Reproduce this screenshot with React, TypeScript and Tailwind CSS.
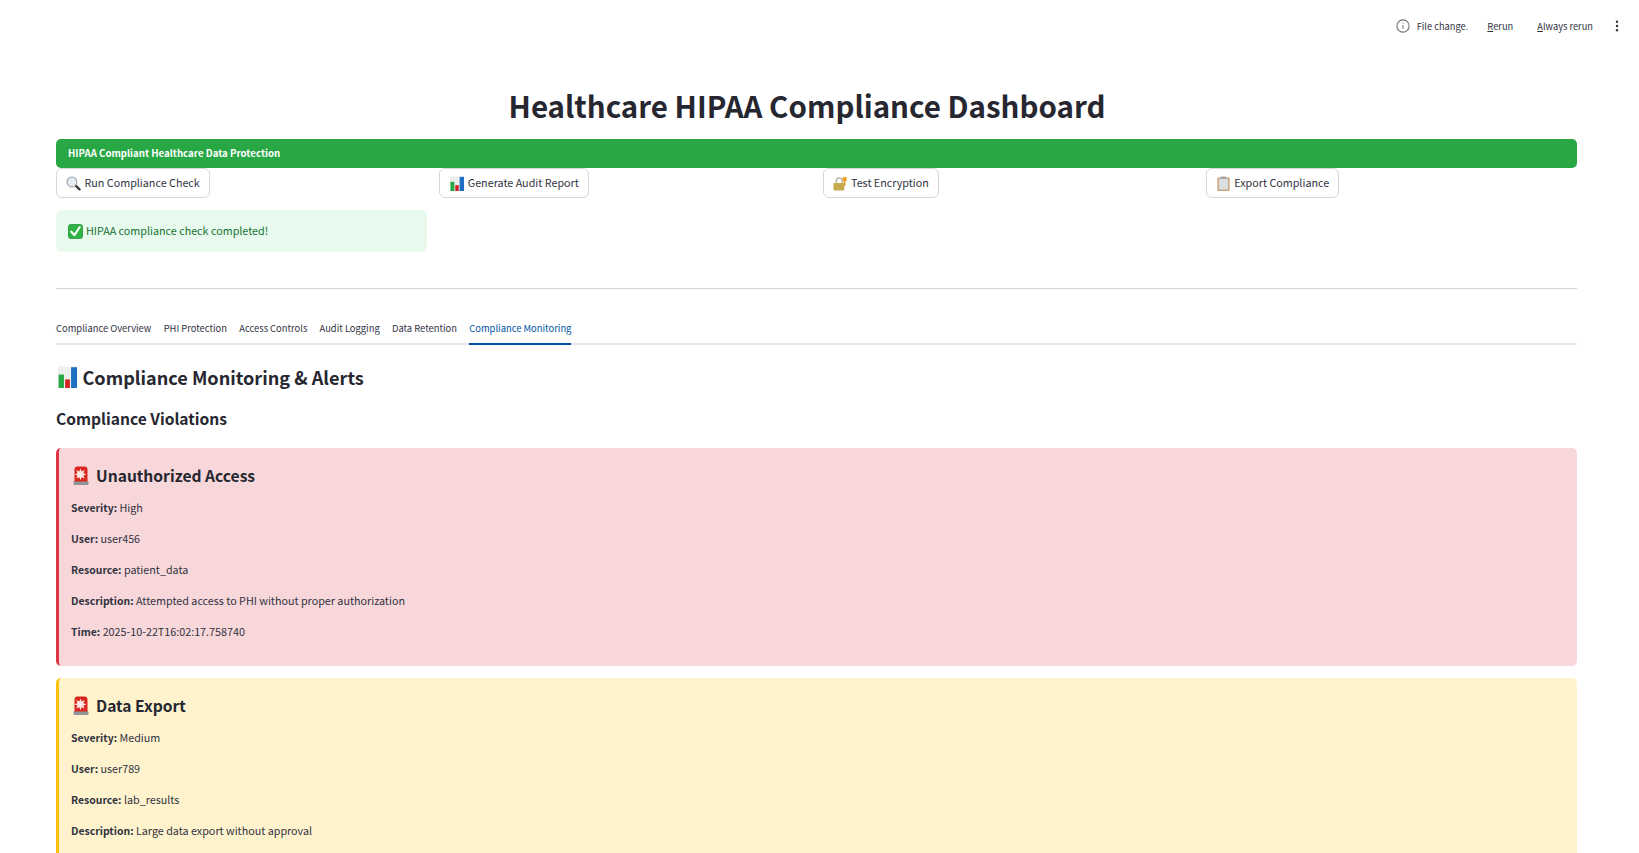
const Magnifier = () => (
  <svg viewBox="0 0 16 16" className="w-[15px] h-[15px] shrink-0">
    <path d="M9.8 9.8 L14.4 14.2" stroke="#3a3a3a" strokeWidth="2.6" strokeLinecap="round" />
    <circle cx="6.3" cy="6.3" r="5.2" fill="#e6eef5" stroke="#a3abb3" strokeWidth="1.3" />
  </svg>
);
const BarChart = ({ c = "ml-[1px] w-[14px] h-[15px]" }: { c?: string }) => (
  <svg viewBox="0 0 16 18" preserveAspectRatio="none" className={c + " shrink-0"}>
    <rect x="0" y="0.5" width="16" height="17.5" fill="#eeeeee" />
    <rect x="0.5" y="7" width="4.5" height="11" fill="#27a844" />
    <rect x="6" y="11" width="4" height="7" fill="#d32424" />
    <rect x="11" y="1" width="5" height="17" fill="#1f6fc4" />
  </svg>
);
const Lock = () => (
  <svg viewBox="0 0 16 16" className="w-[15px] h-[15px] shrink-0">
    <path d="M3.5 8V5.2a3.2 3.2 0 0 1 6.4 0V8" fill="none" stroke="#b8b8b0" strokeWidth="1.6" />
    <rect x="0.5" y="7.5" width="11.5" height="8" rx="1" fill="#c7a94f" />
    <circle cx="12.4" cy="3.4" r="2.5" fill="#e9a62a" />
    <rect x="11.5" y="4.5" width="1.8" height="6" fill="#e0a02a" />
  </svg>
);
const Clipboard = () => (
  <svg viewBox="0 0 16 16" className="w-[15px] h-[15px] shrink-0">
    <rect x="1.5" y="1.5" width="13" height="14.5" rx="1" fill="#c79f78" />
    <rect x="3" y="3" width="10" height="11.5" fill="#dcdfe1" />
    <rect x="5" y="0.5" width="6" height="2.5" rx="0.6" fill="#a5a5a5" />
  </svg>
);
const Check = () => (
  <svg viewBox="0 0 16 16" className="w-[15px] h-[15px] shrink-0">
    <rect x="0.5" y="0.5" width="15" height="15" rx="2.5" fill="#2fb344" stroke="#1f8f35" strokeWidth="0.8" />
    <path d="M3.5 8.2 L6.8 11.8 L12.6 3.2" fill="none" stroke="#fff" strokeWidth="2.2" strokeLinecap="round" strokeLinejoin="round" />
  </svg>
);
const Siren = () => (
  <svg viewBox="0 0 16 19" className="ml-[2px] w-[16px] h-[19px] shrink-0">
    <rect x="0.5" y="15" width="15" height="4" rx="1" fill="#8f9499" />
    <path d="M1.5 15.5V3.5a3 3 0 0 1 3-3h7a3 3 0 0 1 3 3v12z" fill="#d9261f" />
    <path d="M7.5 2.5l1.1 3 3-1.4-1.2 3.1 3 1.1-3 1.2 1.2 3-3-1.2-1.1 3-1.2-3-3 1.2 1.2-3-3-1.2 3-1.1-1.2-3.1 3 1.4z" fill="#fde9e4" />
  </svg>
);

const Field = ({ k, v }: { k: string; v: string }) => (
  <p className="h-[31px] text-[10.76px] leading-[31px] text-[#31333f]">
    <span className="font-bold text-[10.45px]">{k}:</span> {v}
  </p>
);

const Alert = ({ title, bg, border, fields }: { title: string; bg: string; border: string; fields: [string, string][] }) => (
  <div className={`rounded-[5px] border-l-[3px] pl-3 pr-3 pt-[14px] pb-[19px] ${bg} ${border}`}>
    <h4 className="flex items-center gap-[7px] h-[26px] text-[15.6px] leading-[26px] font-semibold text-[#262730]">
      <Siren />
      {title}
    </h4>
    <div className="mt-[4px]">
      {fields.map(([k, v]) => (
        <Field key={k} k={k} v={v} />
      ))}
    </div>
  </div>
);

const Btn = ({ icon, label }: { icon: React.ReactNode; label: string }) => (
  <button className="flex items-center gap-[3.5px] h-[30px] px-[9px] rounded-[6px] border border-[#d5d6da] bg-white text-[10.75px] text-[#31333f]">
    {icon}
    {label}
  </button>
);

const tabs = ["Compliance Overview", "PHI Protection", "Access Controls", "Audit Logging", "Data Retention", "Compliance Monitoring"];

export default function App() {
  return (
    <div className="bg-white h-[853px] overflow-hidden font-['Noto_Sans_CJK_SC','Noto_Sans',sans-serif] text-[#31333f]">
      <header className="flex items-center justify-end h-[52px] text-[9.3px] text-[#31333f]">
        <svg viewBox="0 0 16 16" className="w-[14px] h-[14px] text-[#6d6f78]" fill="none" stroke="currentColor" strokeWidth="1.2">
          <circle cx="8" cy="8" r="7" />
          <path d="M8 7.2v4M8 4.4v1" />
        </svg>
        <span className="ml-[7px] mt-[2px]">File change.</span>
        <span className="ml-[19px] mt-[2px]"><span className="underline">R</span>erun</span>
        <span className="ml-[24px] mt-[2px]"><span className="underline">A</span>lways rerun</span>
        <svg viewBox="0 0 4 14" className="w-[4px] h-[12px] ml-[22px] mr-[20px]" fill="#31333f">
          <circle cx="2" cy="2" r="1.4" />
          <circle cx="2" cy="7" r="1.4" />
          <circle cx="2" cy="12" r="1.4" />
        </svg>
      </header>
      <main className="pl-[56px] pr-[62px]">
        <h1 className="mt-[20px] h-[67px] pr-[19px] text-center text-[29.5px] leading-[67px] font-bold text-[#262730]">Healthcare HIPAA Compliance Dashboard</h1>
        <div className="flex items-center h-[29px] rounded-[5px] bg-[#28a745] px-3 text-[9.7px] font-bold text-white">HIPAA Compliant Healthcare Data Protection</div>
        <div className="grid grid-cols-4 gap-x-3">
          <div>
            <Btn icon={<Magnifier />} label="Run Compliance Check" />
            <div className="mt-[12px] flex items-center gap-[3px] h-[42px] rounded-[6px] bg-[#e8f9ee] px-3 text-[10.75px] text-[#177233]">
              <Check />
              HIPAA compliance check completed!
            </div>
          </div>
          <div><Btn icon={<BarChart />} label="Generate Audit Report" /></div>
          <div><Btn icon={<Lock />} label="Test Encryption" /></div>
          <div><Btn icon={<Clipboard />} label="Export Compliance" /></div>
        </div>
        <hr className="mt-[36px] border-0 h-[1px] bg-[#d4d5d8]" />
        <nav className="mt-[28px] flex gap-[12.25px] border-b-[2px] border-[#e6e7ea] h-[28px] text-[9.4px]">
          {tabs.map((t, i) => (
            <span key={t} className={i === 5 ? "h-[28px] leading-[23px] border-b-[2px] border-[#0054a3] text-[#0054a3]" : "h-[28px] leading-[23px]"}>{t}</span>
          ))}
        </nav>
        <h2 className="mt-[13px] flex items-center gap-[5.5px] h-[38px] text-[18.1px] leading-[38px] font-semibold text-[#262730]">
          <BarChart c="ml-[2px] w-[19px] h-[22px]" />
          Compliance Monitoring &amp; Alerts
        </h2>
        <h3 className="mt-[7px] h-[30px] text-[15.6px] leading-[30px] font-semibold text-[#262730]">Compliance Violations</h3>
        <div className="mt-[15px] flex flex-col gap-3">
          <Alert
            title="Unauthorized Access"
            bg="bg-[#f8d7da]"
            border="border-[#dc3545]"
            fields={[["Severity", "High"], ["User", "user456"], ["Resource", "patient_data"], ["Description", "Attempted access to PHI without proper authorization"], ["Time", "2025-10-22T16:02:17.758740"]]}
          />
          <Alert
            title="Data Export"
            bg="bg-[#fff3cd]"
            border="border-[#ffc107]"
            fields={[["Severity", "Medium"], ["User", "user789"], ["Resource", "lab_results"], ["Description", "Large data export without approval"]]}
          />
        </div>
      </main>
    </div>
  );
}
